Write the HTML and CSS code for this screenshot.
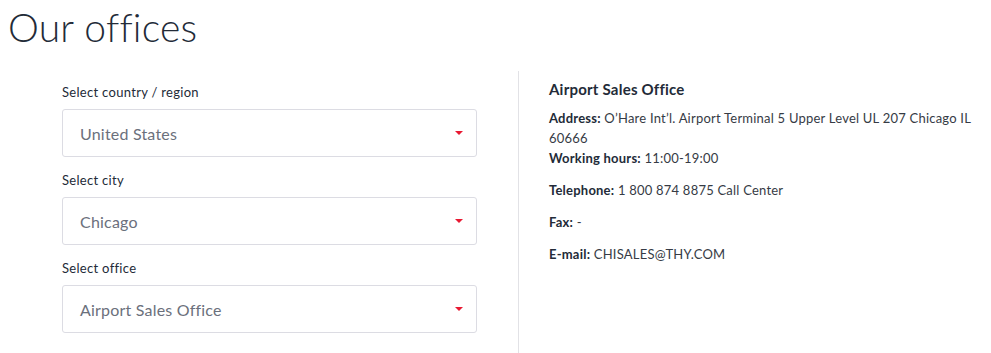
FILE: index.html
```html
<!doctype html>
<html lang="en">
<head>
    <meta charset="UTF-8">
    <title>Our offices</title>
    <link rel="stylesheet" href="styles.css">
</head>
<body>
    <h1 class="page-title">Our offices</h1>
    <div class="offices">
        <form class="office-form">
            <div class="field">
                <label for="country">Select country / region</label>
                <div class="select-box" id="country">
                    <span>United States</span>
                    <i class="caret"></i>
                </div>
            </div>
            <div class="field">
                <label for="city">Select city</label>
                <div class="select-box" id="city">
                    <span>Chicago</span>
                    <i class="caret"></i>
                </div>
            </div>
            <div class="field">
                <label for="office">Select office</label>
                <div class="select-box" id="office">
                    <span>Airport Sales Office</span>
                    <i class="caret"></i>
                </div>
            </div>
        </form>
        <div class="office-info">
            <h3>Airport Sales Office</h3>
            <p><b>Address:</b> O’Hare Int’l. Airport Terminal 5 Upper Level UL 207 Chicago IL 60666<br>
               <b>Working hours:</b> 11:00-19:00</p>
            <p><b>Telephone:</b> 1 800 874 8875 Call Center</p>
            <p><b>Fax:</b> -</p>
            <p><b>E-mail:</b> CHISALES@THY.COM</p>
        </div>
    </div>
</body>
</html>
```

FILE: styles.css
```css
* {margin:0; padding:0; box-sizing: border-box;}
body {
    font-family: Lato, "Open Sans", sans-serif;
    color: #232b38;
    background: #fff;
}
.page-title {
    font-size: 39px;
    font-weight: 300;
    line-height: 48px;
    margin-top: 3px;
    padding-left: 8px;
    letter-spacing: 0.2px;
    color: #232b38;
}
.offices {
    display: flex;
    margin-top: 20px;
}
.office-form {
    width: 519px;
    padding: 12px 41px 30px 62px;
    border-right: 1px solid #e2e2e6;
}
.field {
    margin-bottom: 14px;
}
.field label {
    display: block;
    font-size: 13px;
    line-height: 18px;
    margin-bottom: 8px;
    letter-spacing: 0.3px;
    color: #232b38;
}
.select-box {
    height: 48px;
    border: 1px solid #dcdce3;
    border-radius: 3px;
    padding: 0 13px 0 17px;
    display: flex;
    align-items: center;
    justify-content: space-between;
}
.select-box span {
    font-size: 16px;
    letter-spacing: 0.2px;
    color: #6b707c;
}
.caret {
    width: 0; height: 0;
    border-left: 4px solid transparent;
    border-right: 4px solid transparent;
    border-top: 4px solid #e81932;
}
.office-info {
    flex: 1;
    padding: 8px 12px 0 30px;
    font-size: 13px;
    line-height: 20px;
    letter-spacing: 0.22px;
    color: #363b45;
}
.office-info h3 {
    font-size: 15px;
    font-weight: 700;
    line-height: 20px;
    margin-bottom: 9px;
    color: #232b38;
}
.office-info p {
    margin-bottom: 12px;
}
.office-info b {
    font-weight: 700;
    color: #232b38;
}
```
